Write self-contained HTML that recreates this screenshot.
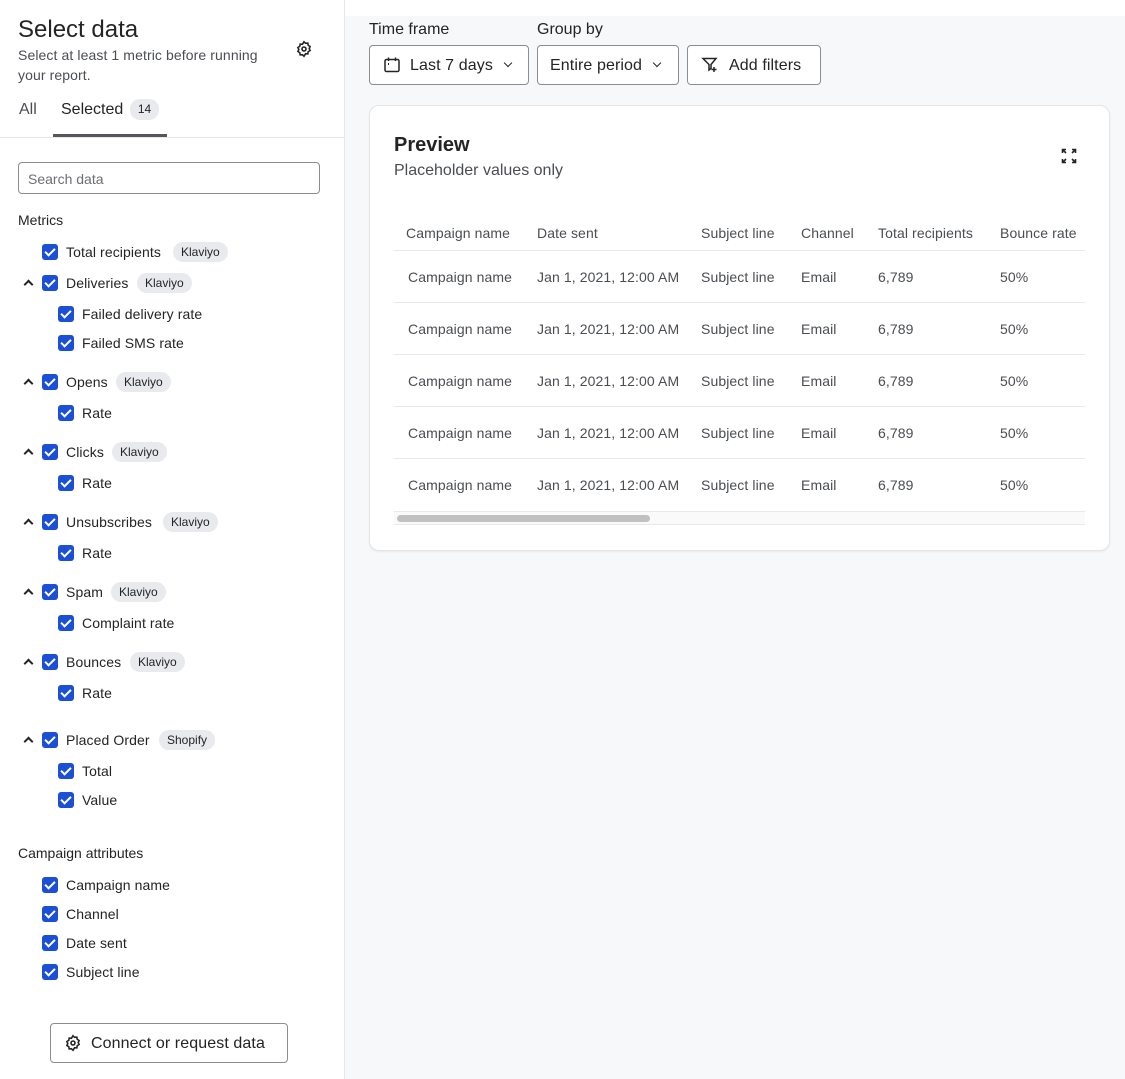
<!DOCTYPE html>
<html><head><meta charset="utf-8"><style>
*{box-sizing:border-box;margin:0;padding:0}
body{width:1125px;height:1079px;overflow:hidden;font-family:"Liberation Sans",sans-serif;color:#232426;background:#fff;position:relative}
.a{position:absolute;white-space:nowrap}
.left{position:absolute;left:0;top:0;width:345px;height:1079px;background:#fff;border-right:1px solid #e6e7ea}
.right{position:absolute;left:345px;top:16px;width:780px;height:1063px;background:#f7f8fa}
.cb{position:absolute;width:16px;height:16px;background:#1a4fd6;border-radius:3px}
.cb:after{content:"";position:absolute;left:5px;top:2px;width:4px;height:8px;border:solid #fff;border-width:0 2px 2px 0;transform:rotate(45deg)}
.lbl{position:absolute;font-size:14px;line-height:16px;white-space:nowrap;letter-spacing:.1px}
.tag{position:absolute;font-size:12px;line-height:20px;height:20px;padding:0 8px;background:#e8eaed;border-radius:10px;white-space:nowrap}
.car{position:absolute;width:7px;height:7px;border-left:2px solid #232426;border-top:2px solid #232426;transform:rotate(45deg)}
.btn{position:absolute;height:40px;border:1px solid #8a8d93;border-radius:4px;background:#fff;font-size:16px;line-height:40px;letter-spacing:.1px}
.th{position:absolute;font-size:14px;color:#4a4d52;white-space:nowrap;letter-spacing:.1px}
.td{position:absolute;font-size:14px;color:#4a4d52;white-space:nowrap;letter-spacing:.1px}
.hl{position:absolute;left:394px;width:691px;height:1px;background:#e8e9eb}
.chev{display:inline-block;width:6px;height:6px;border-right:1.5px solid #232426;border-bottom:1.5px solid #232426;transform:rotate(45deg);margin-left:12px;vertical-align:4px}
</style></head><body>
<div class="left"></div>
<div class="right"></div>
<div class="a" style="left:18px;top:16px;font-size:24px;line-height:28px">Select data</div>
<div class="a" style="left:18px;top:45px;font-size:14px;line-height:20px;color:#4a4d52;white-space:normal;width:262px;letter-spacing:.1px">Select at least 1 metric before running your report.</div>
<svg class="a" style="left:295px;top:40px" width="18" height="18" viewBox="0 0 18 18" fill="none" stroke="#232426" stroke-width="1.6"><path d="M9 1.8l1.6 1.5 2.2-.2.4 2.2 1.9 1.2-.9 2 .9 2-1.9 1.2-.4 2.2-2.2-.2L9 16.2l-1.6-1.5-2.2.2-.4-2.2-1.9-1.2.9-2-.9-2 1.9-1.2.4-2.2 2.2.2z"/><circle cx="9" cy="9" r="2"/></svg>
<div class="a" style="left:19px;top:101px;font-size:16px;color:#4a4d52">All</div>
<div class="a" style="left:61px;top:101px;font-size:16px;color:#232426">Selected</div>
<div class="a" style="left:130px;top:99px;height:21px;width:29px;border-radius:10px;background:#e8eaed;font-size:12px;line-height:21px;text-align:center">14</div>
<div class="a" style="left:53px;top:134px;width:114px;height:3px;background:#55575b"></div>
<div class="a" style="left:0;top:137px;width:345px;height:1px;background:#e6e7ea"></div>
<div class="a" style="left:18px;top:162px;width:302px;height:32px;border:1px solid #8a8d93;border-radius:4px;font-size:14px;line-height:32px;padding-left:9px;color:#6b6e73">Search data</div>
<div class="a" style="left:18px;top:212px;font-size:14px">Metrics</div>

<div class="cb" style="left:42px;top:244px"></div><div class="lbl" style="left:66px;top:244px">Total recipients</div><div class="tag" style="left:173px;top:242px">Klaviyo</div>

<div class="car" style="left:25px;top:281px"></div><div class="cb" style="left:42px;top:275px"></div><div class="lbl" style="left:66px;top:275px">Deliveries</div><div class="tag" style="left:137px;top:273px">Klaviyo</div>
<div class="cb" style="left:58px;top:306px"></div><div class="lbl" style="left:82px;top:306px">Failed delivery rate</div>
<div class="cb" style="left:58px;top:335px"></div><div class="lbl" style="left:82px;top:335px">Failed SMS rate</div>

<div class="car" style="left:25px;top:380px"></div><div class="cb" style="left:42px;top:374px"></div><div class="lbl" style="left:66px;top:374px">Opens</div><div class="tag" style="left:116px;top:372px">Klaviyo</div>
<div class="cb" style="left:58px;top:405px"></div><div class="lbl" style="left:82px;top:405px">Rate</div>

<div class="car" style="left:25px;top:450px"></div><div class="cb" style="left:42px;top:444px"></div><div class="lbl" style="left:66px;top:444px">Clicks</div><div class="tag" style="left:112px;top:442px">Klaviyo</div>
<div class="cb" style="left:58px;top:475px"></div><div class="lbl" style="left:82px;top:475px">Rate</div>

<div class="car" style="left:25px;top:520px"></div><div class="cb" style="left:42px;top:514px"></div><div class="lbl" style="left:66px;top:514px">Unsubscribes</div><div class="tag" style="left:163px;top:512px">Klaviyo</div>
<div class="cb" style="left:58px;top:545px"></div><div class="lbl" style="left:82px;top:545px">Rate</div>

<div class="car" style="left:25px;top:590px"></div><div class="cb" style="left:42px;top:584px"></div><div class="lbl" style="left:66px;top:584px">Spam</div><div class="tag" style="left:111px;top:582px">Klaviyo</div>
<div class="cb" style="left:58px;top:615px"></div><div class="lbl" style="left:82px;top:615px">Complaint rate</div>

<div class="car" style="left:25px;top:660px"></div><div class="cb" style="left:42px;top:654px"></div><div class="lbl" style="left:66px;top:654px">Bounces</div><div class="tag" style="left:130px;top:652px">Klaviyo</div>
<div class="cb" style="left:58px;top:685px"></div><div class="lbl" style="left:82px;top:685px">Rate</div>

<div class="car" style="left:25px;top:738px"></div><div class="cb" style="left:42px;top:732px"></div><div class="lbl" style="left:66px;top:732px">Placed Order</div><div class="tag" style="left:159px;top:730px">Shopify</div>
<div class="cb" style="left:58px;top:763px"></div><div class="lbl" style="left:82px;top:763px">Total</div>
<div class="cb" style="left:58px;top:792px"></div><div class="lbl" style="left:82px;top:792px">Value</div>

<div class="a" style="left:18px;top:845px;font-size:14px">Campaign attributes</div>
<div class="cb" style="left:42px;top:877px"></div><div class="lbl" style="left:66px;top:877px">Campaign name</div>
<div class="cb" style="left:42px;top:906px"></div><div class="lbl" style="left:66px;top:906px">Channel</div>
<div class="cb" style="left:42px;top:935px"></div><div class="lbl" style="left:66px;top:935px">Date sent</div>
<div class="cb" style="left:42px;top:964px"></div><div class="lbl" style="left:66px;top:964px">Subject line</div>

<div class="btn" style="left:50px;top:1023px;width:238px;padding-left:40px">Connect or request data</div>
<svg class="a" style="left:64px;top:1034px" width="18" height="18" viewBox="0 0 18 18" fill="none" stroke="#232426" stroke-width="1.6"><path d="M9 1.8l1.6 1.5 2.2-.2.4 2.2 1.9 1.2-.9 2 .9 2-1.9 1.2-.4 2.2-2.2-.2L9 16.2l-1.6-1.5-2.2.2-.4-2.2-1.9-1.2.9-2-.9-2 1.9-1.2.4-2.2 2.2.2z"/><circle cx="9" cy="9" r="2"/></svg>

<div class="a" style="left:369px;top:21px;font-size:16px">Time frame</div>
<div class="a" style="left:537px;top:21px;font-size:16px">Group by</div>
<div class="btn" style="left:369px;top:45px;width:160px;padding-left:40px">Last 7 days<span class="chev"></span></div>
<svg class="a" style="left:383px;top:56px" width="18" height="18" viewBox="0 0 18 18" fill="none" stroke="#232426" stroke-width="1.5"><rect x="2" y="3.5" width="14" height="12" rx="1.5"/><path d="M5.5 1.5v3.5M12.5 1.5v3.5"/><path d="M5 8h1" stroke-width="2"/></svg>
<div class="btn" style="left:537px;top:45px;width:142px;padding-left:12px">Entire period<span class="chev"></span></div>
<div class="btn" style="left:687px;top:45px;width:134px;padding-left:41px">Add filters</div>
<svg class="a" style="left:701px;top:56px" width="18" height="18" viewBox="0 0 18 18" fill="none" stroke="#232426" stroke-width="1.5"><path d="M2 2.5h13l-5 6v4l-2 1.5v-5.5z"/><path d="M13 11v5M10.5 13.5h5"/></svg>

<div class="a" style="left:369px;top:105px;width:741px;height:446px;background:#fff;border:1px solid #e3e5e8;border-radius:10px;box-shadow:0 1px 2px rgba(0,0,0,.06)"></div>
<div class="a" style="left:394px;top:133px;font-size:20px;font-weight:bold;line-height:24px">Preview</div>
<div class="a" style="left:394px;top:162px;font-size:16px;color:#4a4d52">Placeholder values only</div>
<svg class="a" style="left:1061px;top:148px" width="16" height="16" viewBox="0 0 16 16" fill="none" stroke="#232426" stroke-width="1.6"><path d="M1.5 5V1.5H5M1.5 1.5l3.5 3.5M11 1.5h3.5V5M14.5 1.5L11 5M1.5 11v3.5H5M1.5 14.5L5 11M14.5 11v3.5H11M14.5 14.5L11 11"/></svg>

<div class="th" style="left:406px;top:225px">Campaign name</div>
<div class="th" style="left:537px;top:225px">Date sent</div>
<div class="th" style="left:701px;top:225px">Subject line</div>
<div class="th" style="left:801px;top:225px">Channel</div>
<div class="th" style="left:878px;top:225px">Total recipients</div>
<div class="th" style="left:1000px;top:225px">Bounce rate</div>
<div class="hl" style="top:250px"></div>

<div class="td" style="left:408px;top:269px">Campaign name</div><div class="td" style="left:537px;top:269px">Jan 1, 2021, 12:00 AM</div><div class="td" style="left:701px;top:269px">Subject line</div><div class="td" style="left:801px;top:269px">Email</div><div class="td" style="left:878px;top:269px">6,789</div><div class="td" style="left:1000px;top:269px">50%</div>
<div class="hl" style="top:302px"></div>
<div class="td" style="left:408px;top:321px">Campaign name</div><div class="td" style="left:537px;top:321px">Jan 1, 2021, 12:00 AM</div><div class="td" style="left:701px;top:321px">Subject line</div><div class="td" style="left:801px;top:321px">Email</div><div class="td" style="left:878px;top:321px">6,789</div><div class="td" style="left:1000px;top:321px">50%</div>
<div class="hl" style="top:354px"></div>
<div class="td" style="left:408px;top:373px">Campaign name</div><div class="td" style="left:537px;top:373px">Jan 1, 2021, 12:00 AM</div><div class="td" style="left:701px;top:373px">Subject line</div><div class="td" style="left:801px;top:373px">Email</div><div class="td" style="left:878px;top:373px">6,789</div><div class="td" style="left:1000px;top:373px">50%</div>
<div class="hl" style="top:406px"></div>
<div class="td" style="left:408px;top:425px">Campaign name</div><div class="td" style="left:537px;top:425px">Jan 1, 2021, 12:00 AM</div><div class="td" style="left:701px;top:425px">Subject line</div><div class="td" style="left:801px;top:425px">Email</div><div class="td" style="left:878px;top:425px">6,789</div><div class="td" style="left:1000px;top:425px">50%</div>
<div class="hl" style="top:458px"></div>
<div class="td" style="left:408px;top:477px">Campaign name</div><div class="td" style="left:537px;top:477px">Jan 1, 2021, 12:00 AM</div><div class="td" style="left:701px;top:477px">Subject line</div><div class="td" style="left:801px;top:477px">Email</div><div class="td" style="left:878px;top:477px">6,789</div><div class="td" style="left:1000px;top:477px">50%</div>
<div class="hl" style="top:511px"></div>
<div class="a" style="left:394px;top:512px;width:691px;height:13px;background:#fafafa;border-bottom:1px solid #e8e9eb"></div>
<div class="a" style="left:397px;top:515px;width:253px;height:7px;background:#c1c1c1;border-radius:4px"></div>
</body></html>
